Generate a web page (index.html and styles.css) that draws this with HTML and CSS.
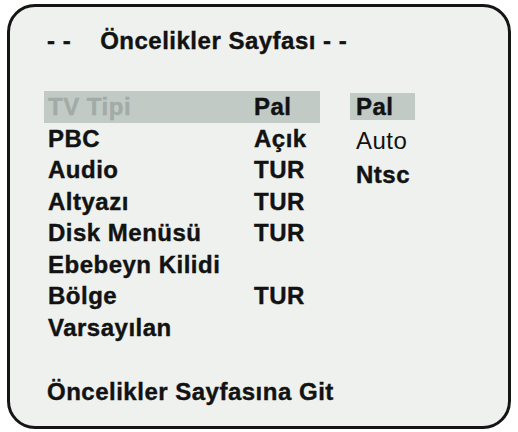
FILE: index.html
```html
<!DOCTYPE html>
<html lang="tr">
<head>
<meta charset="utf-8">
<title>Öncelikler Sayfası</title>
<link rel="stylesheet" href="styles.css">
</head>
<body>
<div class="screen">
  <div class="title"><span class="dashes">- -</span><span class="title-text">Öncelikler Sayfası - -</span></div>
  <div class="main">
    <div class="menu">
      <div class="row active"><span class="label">TV Tipi</span><span class="value">Pal</span></div>
      <div class="row"><span class="label">PBC</span><span class="value">Açık</span></div>
      <div class="row"><span class="label">Audio</span><span class="value">TUR</span></div>
      <div class="row"><span class="label">Altyazı</span><span class="value">TUR</span></div>
      <div class="row"><span class="label">Disk Menüsü</span><span class="value">TUR</span></div>
      <div class="row"><span class="label">Ebebeyn Kilidi</span><span class="value"></span></div>
      <div class="row"><span class="label">Bölge</span><span class="value">TUR</span></div>
      <div class="row"><span class="label">Varsayılan</span><span class="value"></span></div>
    </div>
    <div class="options">
      <div class="option selected">Pal</div>
      <div class="option regular">Auto</div>
      <div class="option">Ntsc</div>
    </div>
  </div>
  <div class="footer">Öncelikler Sayfasına Git</div>
</div>
</body>
</html>
```

FILE: styles.css
```css
* {
  box-sizing: border-box;
}

html, body {
  margin: 0;
  padding: 0;
  background: #ffffff;
}

body {
  width: 518px;
  height: 432px;
  padding: 4px 7px 3px 7px;
  font-family: "Liberation Sans", Arial, sans-serif;
  font-weight: bold;
  font-size: 24px;
  letter-spacing: 0.5px;
  color: #121212;
  -webkit-text-stroke: 0.4px #121212;
}

.screen {
  width: 504px;
  height: 425px;
  border: 3px solid #151515;
  border-radius: 28px;
  background: #eef1ed;
  padding: 19px 0 0 37px;
  display: flex;
  flex-direction: column;
}

.title {
  line-height: 30px;
  height: 30px;
  white-space: pre;
}

.dashes {
  margin-right: 29px;
}

.main {
  margin-top: 35px;
  display: flex;
  align-items: flex-start;
}

.menu {
  margin-left: -3px;
  display: flex;
  flex-direction: column;
}

.row {
  display: grid;
  grid-template-columns: 206px 62px;
  padding: 0 4px 0 4px;
  height: 31.5px;
  line-height: 31.5px;
}

.row.active {
  background: #c1cac5;
}

.row.active .label {
  color: #a3aba7;
  -webkit-text-stroke: 0.4px #a3aba7;
}

.options {
  margin-left: 30px;
  margin-top: 2px;
  display: flex;
  flex-direction: column;
  gap: 7px;
  width: 65px;
}

.option {
  height: 27px;
  line-height: 27px;
  padding-left: 6px;
}

.option.selected {
  background: #c1cac5;
}

.option.regular {
  font-weight: normal;
  -webkit-text-stroke: 0;
}

.footer {
  margin-top: 33px;
  line-height: 31.5px;
}
```
